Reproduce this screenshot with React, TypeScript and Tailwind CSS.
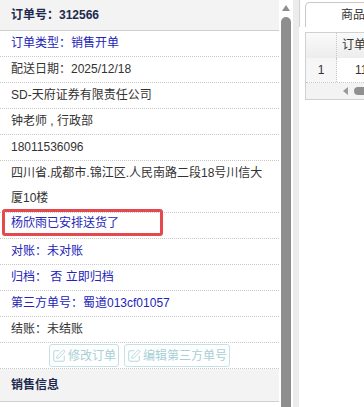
import { SquarePen } from "lucide-react"

const font = { fontFamily: '"Liberation Sans", "Noto Sans CJK SC", Arial, sans-serif' }

type Row = { text: string; blue?: boolean }

const rowsTop: Row[] = [
  { text: "订单类型：销售开单", blue: true },
  { text: "配送日期：2025/12/18" },
  { text: "SD-天府证券有限责任公司" },
  { text: "钟老师 , 行政部" },
  { text: "18011536096" },
]

const rowsBottom: Row[] = [
  { text: "对账：未对账", blue: true },
  { text: "归档： 否 立即归档", blue: true },
  { text: "第三方单号：蜀道013cf01057", blue: true },
  { text: "结账：未结账" },
]

function InfoRow({ row }: { row: Row }) {
  return (
    <div
      className={`h-[26px] border-b border-dotted border-[#c8c8c8] pl-[11px] text-[12px] leading-[25px] whitespace-pre ${
        row.blue ? "text-[#2323b8]" : "text-[#333333]"
      }`}
    >
      {row.text}
    </div>
  )
}

function EditButton({ label }: { label: string }) {
  return (
    <div className="flex h-[23px] items-center gap-[2px] rounded-[3px] border border-[#c4e2e6] bg-white px-[2px] text-[12px] text-[#a6cfd6]">
      <SquarePen size={14} strokeWidth={1.4} className="text-[#a6cfd6]" />
      <span>{label}</span>
    </div>
  )
}

export default function App() {
  return (
    <div className="flex h-[407px] w-[364px] overflow-hidden bg-white" style={font}>
      {/* left order panel */}
      <div className="w-[279px] shrink-0">
        <div className="h-[31px] border-b border-[#cfcfcf] bg-[#f3f3f3] pl-[11px] text-[12px] font-bold leading-[30px] text-[#1d2a4d]">
          订单号：312566
        </div>
        {rowsTop.map((r) => (
          <InfoRow key={r.text} row={r} />
        ))}
        <div className="border-b border-dotted border-[#c8c8c8] pl-[11px] pr-[10px] pb-[1px] text-[12px] leading-[25px] text-[#333333]">
          四川省.成都市.锦江区.人民南路二段18号川信大厦10楼
        </div>
        <div className="relative h-[26px] border-b border-dotted border-[#c8c8c8] pl-[11px] text-[12px] leading-[21px] text-[#2323b8]">
          杨欣雨已安排送货了
          <div className="absolute -top-[4px] left-[2px] h-[27px] w-[161px] rounded-[3px] border-[3px] border-[#e5484d]" />
        </div>
        {rowsBottom.map((r) => (
          <InfoRow key={r.text} row={r} />
        ))}
        <div className="flex h-[26px] items-center justify-center gap-[5px] border-b border-dotted border-[#c8c8c8]">
          <EditButton label="修改订单" />
          <EditButton label="编辑第三方单号" />
        </div>
        <div className="h-[33px] border-b border-[#cfcfcf] bg-[#f3f3f3] pl-[11px] text-[12px] font-bold leading-[32px] text-[#1d2a4d]">
          销售信息
        </div>
      </div>

      {/* scrollbar */}
      <div className="flex w-[14px] shrink-0 flex-col items-center bg-white">
        <svg width="8" height="6" viewBox="0 0 8 6" className="mt-[5px]">
          <polygon points="4,0 8,6 0,6" fill="#8e8e8e" />
        </svg>
        <div className="mt-[6px] w-[10px] flex-1 rounded-t-full bg-[#8e8e8e]" />
      </div>
      <div className="w-[6px] shrink-0 bg-[#ececec]" />

      {/* right panel */}
      <div className="relative min-w-0 flex-1 overflow-hidden">
        <div className="flex h-[27px] w-[200px]">
          <div className="w-[1px] shrink-0 bg-[#d2d2d2]" />
          <div className="ml-[5px] mt-[2px] h-[25px] w-[100px] shrink-0 whitespace-nowrap rounded-tl-[5px] border-l border-t border-[#c8c8c8] bg-white pl-[35px] text-[12px] leading-[24px] text-[#333333]">
            商品明细
          </div>
        </div>
        <div className="ml-[6px] mt-[5px] w-[120px] border border-[#d0d0d0] text-[12px] whitespace-nowrap text-[#333333]">
          <div className="flex h-[25px] bg-gradient-to-b from-[#fafafa] to-[#ededed] leading-[25px]">
            <div className="w-[31px] shrink-0 border-r border-dotted border-[#c8c8c8]" />
            <div className="pl-[5px]">订单编号</div>
          </div>
          <div className="flex h-[25px] border-b border-dotted border-[#c8c8c8] leading-[24px]">
            <div className="w-[31px] shrink-0 border-r border-dotted border-[#c8c8c8] bg-[#f6f6f6] text-center">1</div>
            <div className="pl-[18px]">11256</div>
          </div>
          <div className="flex h-[16px] items-center bg-[#f3f3f3]">
            <svg width="5" height="8" viewBox="0 0 5 8" className="ml-[37px] shrink-0">
              <polygon points="0,4 5,0 5,8" fill="#9a9a9a" />
            </svg>
            <div className="ml-[6px] h-[8px] w-[60px] shrink-0 rounded-full bg-[#909090]" />
          </div>
        </div>
      </div>
    </div>
  )
}
